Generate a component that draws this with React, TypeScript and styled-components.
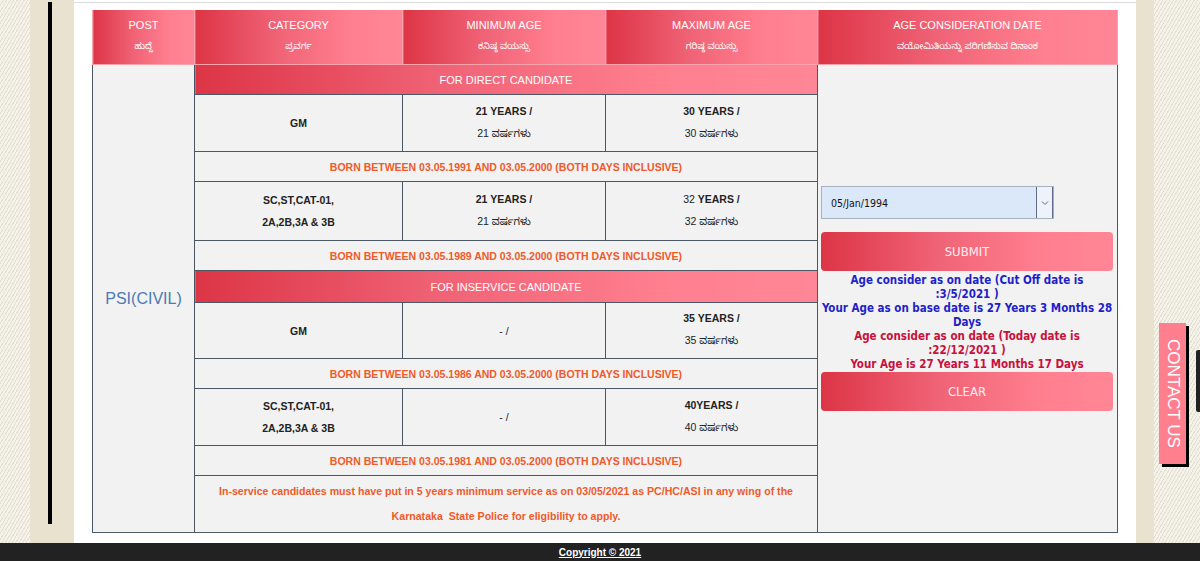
import React from 'react';
import styled, {createGlobalStyle} from 'styled-components';

const GlobalStyle = createGlobalStyle`
  html, body {
    margin: 0;
    padding: 0;
    overflow: hidden;
    background: #f3f0e6;
  }
`;

const gradient = 'linear-gradient(to right, #dc3546 0%, #f06376 40%, #ff7f8f 75%, #ff8696 100%)';

const Page = styled.div`
  width: 1200px;
  height: 561px;
  display: flex;
  flex-direction: column;
  position: relative;
  font-family: "Liberation Sans", Arial, sans-serif;
`;

const Main = styled.div`
  display: flex;
  height: 543px;
`;

const Texture = styled.div<{w: number}>`
  width: ${p => p.w}px;
  background-color: #f5f2ea;
  background-image: repeating-linear-gradient(-60deg, rgba(150, 140, 110, 0.18) 0 1px, transparent 1px 3px);
`;

const Beige = styled.div<{w: number}>`
  width: ${p => p.w}px;
  background: #e8e2ce;
  display: flex;
`;

const BlackRule = styled.div`
  width: 4px;
  height: 522px;
  margin: 2px 0 0 18px;
  background: #000;
`;

const Content = styled.div`
  width: 1062px;
  background: #fff;
  box-shadow: inset 0 2px 0 #fff, inset 0 3px 0 #dedede;
  padding: 10px 0 0 18px;
  box-sizing: border-box;
`;

const Table = styled.table`
  border-collapse: collapse;
  table-layout: fixed;
  width: 1025px;
`;

const HeadCell = styled.th<{w: number}>`
  width: ${p => p.w}px;
  height: 54px;
  padding: 0;
  background: ${gradient};
  border: 1px solid #f4a3ad;
  border-top: none;
  color: #fff;
  font-weight: normal;
  font-size: 11px;
  line-height: 23px;
  text-align: center;
  vertical-align: middle;
`;

const Kan = styled.div`
  font-family: "Noto Sans Kannada", "Noto Sans", sans-serif;
  font-size: 9px;
  line-height: 23px;
`;

const Cell = styled.td<{h?: number}>`
  height: ${p => (p.h ? `${p.h}px` : 'auto')};
  padding: 0;
  background: #f2f2f2;
  border: 1px solid #4b5763;
  text-align: center;
  vertical-align: middle;
  color: #222;
  font-size: 10.5px;
  font-weight: bold;
  line-height: 22px;
`;

const PostCell = styled(Cell)`
  color: #4a7bb5;
  font-size: 16px;
  font-weight: normal;
`;

const SectionCell = styled.td<{h: number}>`
  height: ${p => p.h}px;
  padding: 0;
  background: ${gradient};
  border: 1px solid #4b5763;
  color: #fff;
  font-size: 11px;
  text-align: center;
  vertical-align: middle;
`;

const BornCell = styled(Cell)`
  color: #ef5a2b;
`;

const NoteCell = styled(Cell)`
  color: #ef5a2b;
  font-size: 10.6px;
  line-height: 25px;
`;

const Light = styled.span`
  font-weight: normal;
`;

const KanLight = styled.span`
  font-weight: normal;
  font-family: "Noto Sans Kannada", "Noto Sans", sans-serif;
  font-size: 10px;
`;

const DateCell = styled(Cell)`
  padding: 0 3px;
  text-align: left;
`;

const SelectBox = styled.div`
  width: 233px;
  height: 33px;
  box-sizing: border-box;
  display: flex;
  border: 1px solid #a8b2bf;
  background: #dbe8fa;
`;

const SelectText = styled.div`
  flex: 1;
  padding-left: 9px;
  display: flex;
  align-items: center;
  font-family: "DejaVu Sans Condensed", "DejaVu Sans", sans-serif;
  font-weight: normal;
  font-size: 10.5px;
  color: #111;
`;

const ArrowBox = styled.div`
  width: 15px;
  border-left: 1px solid #5e6a8c;
  border-right: 1px solid #5e6a8c;
  display: flex;
  align-items: center;
  justify-content: center;
  background: #eef3fb;
`;

const Button = styled.div<{top: number}>`
  width: 292px;
  height: 39px;
  margin-top: ${p => p.top}px;
  border-radius: 4px;
  background: ${gradient};
  color: #fdf0f2;
  display: flex;
  align-items: center;
  justify-content: center;
  font-family: "DejaVu Sans Condensed", "DejaVu Sans", sans-serif;
  font-weight: normal;
  font-size: 13px;
`;

const Result = styled.div<{tone: string}>`
  width: 292px;
  text-align: center;
  white-space: nowrap;
  font-family: "DejaVu Sans Condensed", "DejaVu Sans", sans-serif;
  font-weight: bold;
  font-size: 11.5px;
  line-height: 14px;
  color: ${p => p.tone};
`;

const Results = styled.div`
  padding: 2px 0 1px;
`;

const ContactTab = styled.div`
  position: absolute;
  left: 1159px;
  top: 323px;
  width: 27px;
  height: 141px;
  background: #ff7f8f;
  box-shadow: 3px 3px 0 #000;
  color: #fff;
  writing-mode: vertical-rl;
  display: flex;
  align-items: center;
  justify-content: center;
  font-size: 17px;
`;

const ScrollNub = styled.div`
  position: absolute;
  left: 1196px;
  top: 350px;
  width: 4px;
  height: 62px;
  border-radius: 2px 0 0 2px;
  background: #222;
`;

const Footer = styled.div`
  height: 18px;
  background: #222;
  display: flex;
  align-items: center;
  justify-content: center;
`;

const FooterLink = styled.a`
  color: #fff;
  font-size: 10px;
  font-weight: bold;
  text-decoration: underline;
`;

const Chevron = () => (
  <svg width="8" height="6" viewBox="0 0 8 6">
    <path d="M1 1.5 L4 4.5 L7 1.5" fill="none" stroke="#666" strokeWidth="1"/>
  </svg>
);

const years = 'ವರ್ಷಗಳು';

const AgeCell: React.FC<{n: string; boldNum?: boolean; joined?: boolean}> = ({n, boldNum = true, joined}) => (
  <Cell>
    {boldNum ? n : <Light>{n}</Light>}{joined ? '' : ' '}YEARS /<br/>
    <Light>{n} </Light><KanLight>{years}</KanLight>
  </Cell>
);

const App: React.FC = () => {
  return (
    <Page>
      <GlobalStyle/>
      <Main>
        <Texture w={30}/>
        <Beige w={44}><BlackRule/></Beige>
        <Content>
          <Table>
            <thead>
              <tr>
                <HeadCell w={101}>POST<Kan>ಹುದ್ದೆ</Kan></HeadCell>
                <HeadCell w={207}>CATEGORY<Kan>ಪ್ರವರ್ಗ</Kan></HeadCell>
                <HeadCell w={202}>MINIMUM AGE<Kan>ಕನಿಷ್ಠ ವಯಸ್ಸು</Kan></HeadCell>
                <HeadCell w={211}>MAXIMUM AGE<Kan>ಗರಿಷ್ಠ ವಯಸ್ಸು</Kan></HeadCell>
                <HeadCell w={299}>AGE CONSIDERATION DATE<Kan>ವಯೋಮಿತಿಯನ್ನು ಪರಿಗಣಿಸುವ ದಿನಾಂಕ</Kan></HeadCell>
              </tr>
            </thead>
            <tbody>
              <tr>
                <PostCell rowSpan={11}>PSI(CIVIL)</PostCell>
                <SectionCell colSpan={3} h={29}>FOR DIRECT CANDIDATE</SectionCell>
                <DateCell rowSpan={11}>
                  <SelectBox>
                    <SelectText>05/Jan/1994</SelectText>
                    <ArrowBox><Chevron/></ArrowBox>
                  </SelectBox>
                  <Button top={13}>SUBMIT</Button>
                  <Results>
                    <Result tone="#1f1fc8">Age consider as on date (Cut Off date is<br/>:3/5/2021 )</Result>
                    <Result tone="#1f1fc8">Your Age as on base date is 27 Years 3 Months 28<br/>Days</Result>
                    <Result tone="#c8103c">Age consider as on date (Today date is<br/>:22/12/2021 )</Result>
                    <Result tone="#c8103c">Your Age is 27 Years 11 Months 17 Days</Result>
                  </Results>
                  <Button top={0}>CLEAR</Button>
                </DateCell>
              </tr>
              <tr>
                <Cell h={56}>GM</Cell>
                <AgeCell n="21"/>
                <AgeCell n="30"/>
              </tr>
              <tr><BornCell colSpan={3} h={29}>BORN BETWEEN 03.05.1991 AND 03.05.2000 (BOTH DAYS INCLUSIVE)</BornCell></tr>
              <tr>
                <Cell h={58}>SC,ST,CAT-01,<br/>2A,2B,3A &amp; 3B</Cell>
                <AgeCell n="21"/>
                <AgeCell n="32" boldNum={false}/>
              </tr>
              <tr><BornCell colSpan={3} h={29}>BORN BETWEEN 03.05.1989 AND 03.05.2000 (BOTH DAYS INCLUSIVE)</BornCell></tr>
              <tr><SectionCell colSpan={3} h={31}>FOR INSERVICE CANDIDATE</SectionCell></tr>
              <tr>
                <Cell h={55}>GM</Cell>
                <Cell><Light>- /</Light></Cell>
                <AgeCell n="35"/>
              </tr>
              <tr><BornCell colSpan={3} h={29}>BORN BETWEEN 03.05.1986 AND 03.05.2000 (BOTH DAYS INCLUSIVE)</BornCell></tr>
              <tr>
                <Cell h={56}>SC,ST,CAT-01,<br/>2A,2B,3A &amp; 3B</Cell>
                <Cell><Light>- /</Light></Cell>
                <AgeCell n="40" joined/>
              </tr>
              <tr><BornCell colSpan={3} h={29}>BORN BETWEEN 03.05.1981 AND 03.05.2000 (BOTH DAYS INCLUSIVE)</BornCell></tr>
              <tr>
                <NoteCell colSpan={3} h={56}>
                  In-service candidates must have put in 5 years minimum service as on 03/05/2021 as PC/HC/ASI in any wing of the<br/>
                  Karnataka&nbsp; State Police for eligibility to apply.
                </NoteCell>
              </tr>
            </tbody>
          </Table>
        </Content>
        <Beige w={18}/>
        <Texture w={46}/>
      </Main>
      <Footer><FooterLink>Copyright © 2021</FooterLink></Footer>
      <ContactTab>CONTACT US</ContactTab>
      <ScrollNub/>
    </Page>
  );
};

export default App;
